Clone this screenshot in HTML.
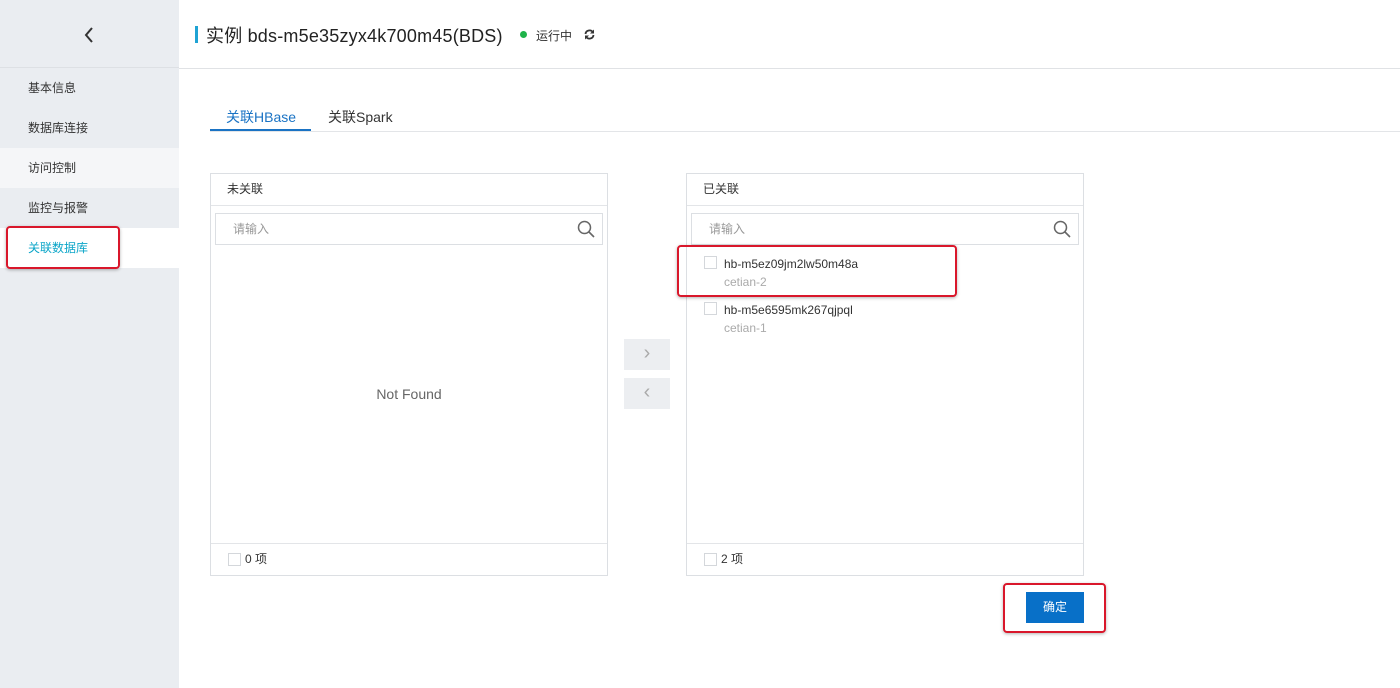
<!DOCTYPE html>
<html><head><meta charset="utf-8"><style>
*{box-sizing:border-box;margin:0;padding:0}
body{width:1400px;height:688px;overflow:hidden;background:#fff;font-family:"Liberation Sans","Noto Sans CJK SC",sans-serif;color:#333;position:relative}
.side{position:absolute;left:0;top:0;width:179px;height:688px;background:#eaedf1}
.side .top{height:68px;border-bottom:1px solid #dde0e4;position:relative}
.nav{position:absolute;left:0;width:179px;height:40px;line-height:40px;padding-left:28px;font-size:12px;color:#333}
.abs{position:absolute}
.red{position:absolute;border:2px solid #d9172b;border-radius:4px;box-shadow:0 1px 3px rgba(0,0,0,.3)}
.panel{position:absolute;top:173px;width:398px;height:403px;border:1px solid #dcdfe3;background:#fff}
.ph{height:32px;line-height:30px;border-bottom:1px solid #e3e5e8;padding-left:16px;font-size:12px}
.search{position:absolute;left:4px;top:39px;width:388px;height:32px;border:1px solid #dcdfe3;font-size:12px;color:#999;line-height:30px;padding-left:17px}
.pf{position:absolute;left:0;bottom:0;width:100%;height:32px;border-top:1px solid #e3e5e8;font-size:12px;line-height:30px;padding-left:34px}
.cb{position:absolute;width:13px;height:13px;border:1px solid #d4d7db;background:#fff}
.btn{position:absolute;left:624px;width:46px;height:31px;background:#eceef1;color:#aaa;text-align:center;line-height:29px;font-size:20px}
</style></head><body>
<div class="side">
 <div class="top"><svg class="abs" style="left:83px;top:26px" width="12" height="18" viewBox="0 0 12 18"><path d="M9 2L3 9l6 7" stroke="#333" stroke-width="2" fill="none"/></svg></div>
 <div class="nav" style="top:68px">基本信息</div>
 <div class="nav" style="top:108px">数据库连接</div>
 <div class="nav" style="top:148px;background:#f5f6f8">访问控制</div>
 <div class="nav" style="top:188px">监控与报警</div>
 <div class="nav" style="top:228px;background:#fff;color:#0aa5c8">关联数据库</div>
</div>
<div class="red" style="left:6px;top:226px;width:114px;height:43px"></div>
<div class="abs" style="left:179px;top:68px;width:1221px;height:1px;background:#e0e2e5"></div>
<div class="abs" style="left:195px;top:26px;width:3px;height:17px;background:#1fa3d4"></div>
<div class="abs" style="left:206px;top:22px;font-size:18px;color:#222;letter-spacing:0.2px">实例 bds-m5e35zyx4k700m45(BDS)</div>
<div class="abs" style="left:520px;top:31px;width:7px;height:7px;border-radius:50%;background:#1fb34a"></div>
<div class="abs" style="left:536px;top:27px;font-size:12px;color:#333">运行中</div>
<svg class="abs" style="left:583px;top:28px" width="13" height="13" viewBox="0 0 13 13"><path d="M2.5 6A4 4 0 0 1 10 4.5M10.5 7A4 4 0 0 1 3 8.5" stroke="#333" stroke-width="1.8" fill="none"/><path d="M11 1.5v4H7z M2 11.5v-4h4z" fill="#333"/></svg>
<div class="abs" style="left:226px;top:107px;font-size:14px;color:#1a73c4">关联HBase</div>
<div class="abs" style="left:328px;top:107px;font-size:14px;color:#333">关联Spark</div>
<div class="abs" style="left:210px;top:131px;width:1190px;height:1px;background:#e3e5e8"></div>
<div class="abs" style="left:210px;top:129px;width:101px;height:2px;background:#1a73c4"></div>

<div class="panel" style="left:210px">
 <div class="ph">未关联</div>
 <div class="search">请输入<svg class="abs" style="right:7px;top:6px" width="18" height="18" viewBox="0 0 18 18"><circle cx="7.5" cy="7.5" r="6" stroke="#666" stroke-width="1.5" fill="none"/><path d="M12 12l5 5" stroke="#666" stroke-width="1.6"/></svg></div>
 <div class="abs" style="left:0;width:100%;top:212px;text-align:center;font-size:14px;color:#666">Not Found</div>
 <div class="pf"><div class="cb" style="left:17px;top:9px"></div>0 项</div>
</div>
<div class="btn" style="top:339px">›</div>
<div class="btn" style="top:378px">‹</div>
<div class="panel" style="left:686px">
 <div class="ph">已关联</div>
 <div class="search">请输入<svg class="abs" style="right:7px;top:6px" width="18" height="18" viewBox="0 0 18 18"><circle cx="7.5" cy="7.5" r="6" stroke="#666" stroke-width="1.5" fill="none"/><path d="M12 12l5 5" stroke="#666" stroke-width="1.6"/></svg></div>
 <div class="cb" style="left:17px;top:82px"></div>
 <div class="abs" style="left:37px;top:83px;font-size:12px;color:#333">hb-m5ez09jm2lw50m48a</div>
 <div class="abs" style="left:37px;top:101px;font-size:12px;color:#aaa">cetian-2</div>
 <div class="cb" style="left:17px;top:128px"></div>
 <div class="abs" style="left:37px;top:129px;font-size:12px;color:#333">hb-m5e6595mk267qjpql</div>
 <div class="abs" style="left:37px;top:147px;font-size:12px;color:#aaa">cetian-1</div>
 <div class="pf"><div class="cb" style="left:17px;top:9px"></div>2 项</div>
</div>
<div class="red" style="left:677px;top:245px;width:280px;height:52px"></div>
<div class="abs" style="left:1026px;top:592px;width:58px;height:31px;background:#0870c8;color:#fff;font-size:12px;text-align:center;line-height:31px">确定</div>
<div class="red" style="left:1003px;top:583px;width:103px;height:50px"></div>
</body></html>
